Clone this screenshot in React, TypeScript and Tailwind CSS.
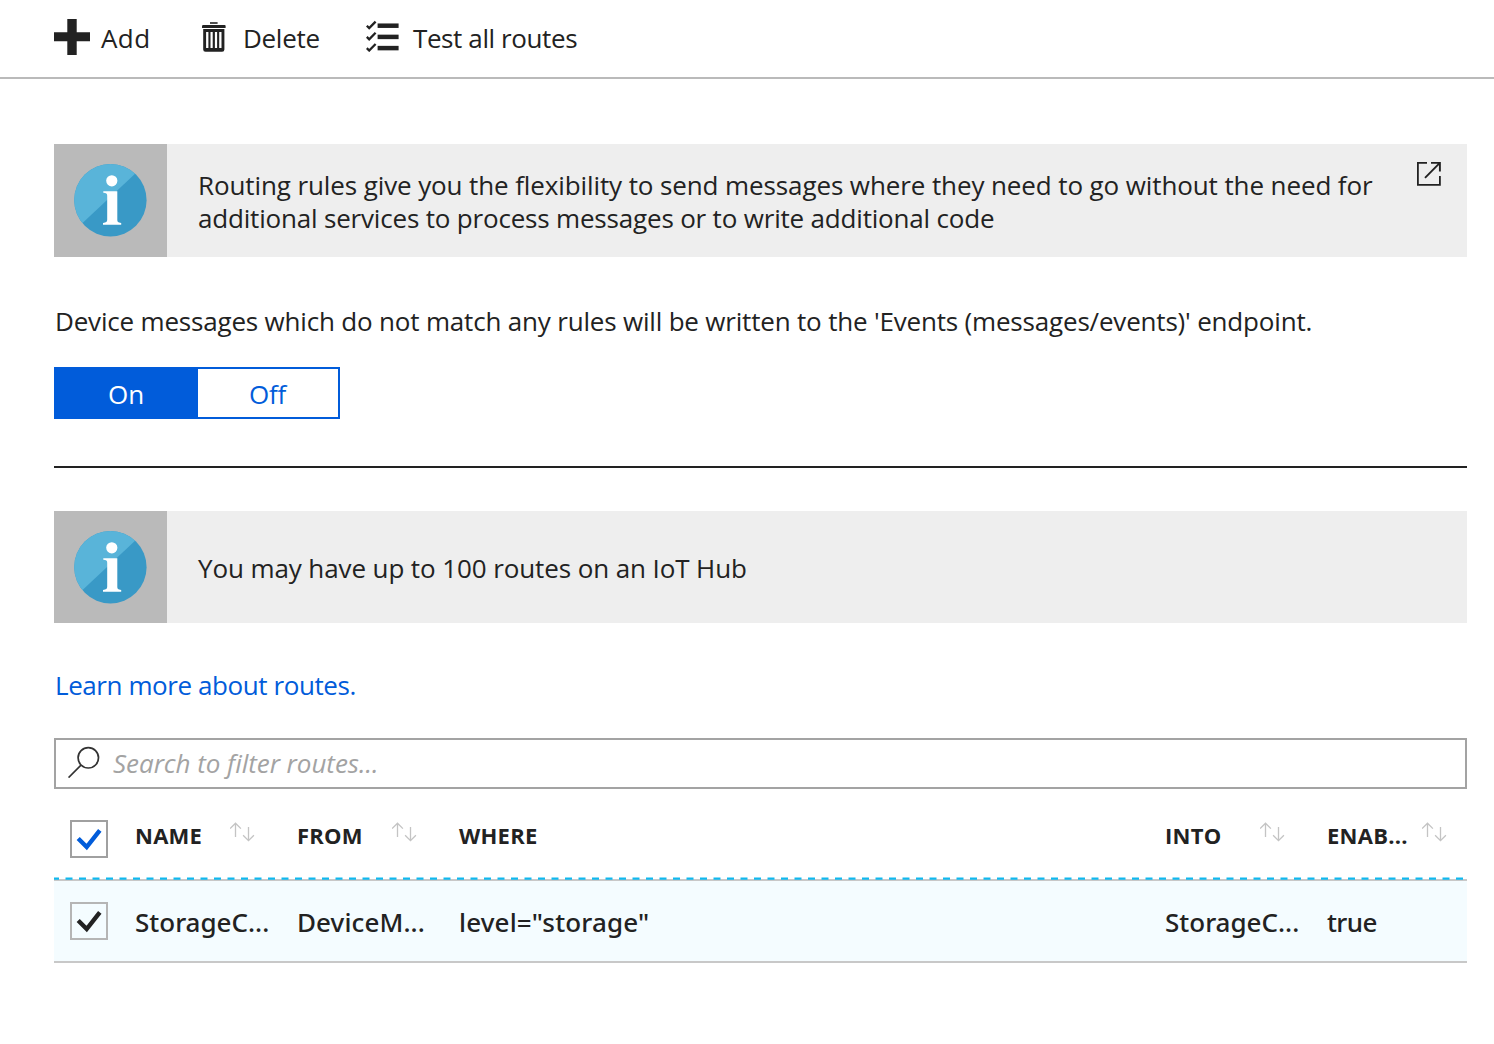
import React, { useId } from 'react';

function PlusIcon() {
  return (
    <svg className="block h-9 w-9" viewBox="0 0 36 36" fill="#222">
      <path d="M13.3 0h9.4v13.3H36v9H22.7V36h-9.4V22.3H0v-9h13.3z" />
    </svg>
  );
}

function TrashIcon() {
  return (
    <svg className="block h-[30px] w-6" viewBox="0 0 24 30" fill="#222">
      <path d="M8 0.2h7.6v1.6H8z" />
      <path d="M1.2 3h21.400a1 1 0 0 1 1 1v1.900H0V4.2A1.2 1.2 0 0 1 1.200 3z" />
      <path
        fillRule="evenodd"
        d="M1.200 7h21.200v20.500a2.300 2.300 0 0 1-2.300 2.300H3.500a2.300 2.300 0 0 1-2.300-2.300zM4.100 10v16h2.300V10zM8.500 10v16h2.200V10zM12.900 10v16h2.200V10zM17.200 10v16h2.300V10z"
      />
    </svg>
  );
}

function ChecklistIcon() {
  return (
    <svg className="block h-8 w-[33px]" viewBox="0 0 33 32" fill="none" stroke="#222">
      {[0, 11.2, 22.4].map((y) => (
        <g key={y} transform={`translate(0 ${y})`}>
          <path d="M0.800 5.700l2.400 2.400L9.600 1.600" strokeWidth="2.300" />
          <path d="M11.600 5.700h21" strokeWidth="4.500" />
        </g>
      ))}
    </svg>
  );
}

function InfoBadge() {
  const clip = useId();
  return (
    <div className="flex w-[113px] shrink-0 items-center justify-center bg-[#bababa]">
      <svg className="block h-[73px] w-[73px]" viewBox="0 0 73 73">
        <clipPath id={clip}>
          <circle cx="36.400" cy="36.200" r="36.200" />
        </clipPath>
        <g clipPath={`url(#${clip})`}>
          <path d="M0 0h73v73H0z" fill="#3999c6" />
          <path d="M0 0H71.500L0 67z" fill="#59b4d9" />
        </g>
        <circle cx="37.800" cy="16.800" r="5.600" fill="#fff" />
        <path
          fill="#fff"
          d="M29.300 27.200h14v28.300c0 2.300 0.600 2.900 3.900 3.500v1.700H29v-1.700c3.200-0.600 4.200-1.200 4.200-3.500V31.700c0-2.300-1-2.600-3.900-3z"
        />
      </svg>
    </div>
  );
}

function ExternalIcon() {
  return (
    <svg className="block h-6 w-6" viewBox="0 0 24 24" fill="none" stroke="#222" strokeWidth="1.800">
      <path d="M10 0.900H0.900v22h22V14" />
      <path d="M14 0.900h8.900V9.500M22.600 1.200L8 15.800" strokeWidth="1.900" />
    </svg>
  );
}

function SearchIcon() {
  return (
    <svg className="block h-8 w-8" viewBox="0 0 32 32" fill="none" stroke="#333" strokeWidth="1.700">
      <circle cx="20.300" cy="11.800" r="10.200" />
      <path d="M13 19.100L0.500 31.600" />
    </svg>
  );
}

function SortIcon() {
  return (
    <svg className="mt-[2px] block h-5 w-[25px] shrink-0" viewBox="0 0 25 20" fill="none" stroke="#c4c4c4" strokeWidth="1.300">
      <path d="M5.500 15V1.200M0.100 6.600L5.500 1.200l5.400 5.400" />
      <path d="M18.500 5v13.600M13.100 13.200l5.400 5.400 5.400-5.400" />
    </svg>
  );
}

function Checkbox({ header }: { header?: boolean }) {
  return (
    <div
      className={
        header
          ? 'h-[38px] w-[38px] border-2 border-[#a0a0a0] bg-white text-[#015cda]'
          : 'h-[38px] w-[38px] border-2 border-[#b5b5b5] bg-[#f4fcff] text-[#222]'
      }
    >
      <svg className="block h-[34px] w-[34px]" viewBox="0 0 34 34" fill="none" stroke="currentColor" strokeWidth="4.400">
        <path d="M6.200 16.500l8.500 8.500L27.800 8.300" />
      </svg>
    </div>
  );
}

function HeaderCell({ label, className, sortable = true }: { label: string; className: string; sortable?: boolean }) {
  return (
    <div className={`flex justify-between ${className}`}>
      <span className="-mt-px text-[22px] leading-[33px] font-bold tracking-[0.25px]">{label}</span>
      {sortable && <SortIcon />}
    </div>
  );
}

export default function App() {
  return (
    <div className="h-[1044px] w-[1494px] bg-white font-['Open_Sans',sans-serif] text-[26px] leading-[33px] whitespace-nowrap text-[#222]">
      <header className="flex h-[79px] items-start border-b-2 border-[#bababa] pl-[54px]">
        <button className="flex w-[148px]">
          <span className="mt-[19px]"><PlusIcon /></span>
          <span className="mt-[22px] ml-[11px] tracking-[0.4px]">Add</span>
        </button>
        <button className="flex w-[164px]">
          <span className="mt-[22px]"><TrashIcon /></span>
          <span className="mt-[22px] ml-[17px] tracking-[-0.3px]">Delete</span>
        </button>
        <button className="flex">
          <span className="mt-5"><ChecklistIcon /></span>
          <span className="mt-[22px] ml-[14px] tracking-[-0.4px]">Test all routes</span>
        </button>
      </header>

      <main className="mt-[65px] ml-[54px] w-[1413px]">
        <section className="flex h-[113px] bg-[#eee]">
          <InfoBadge />
          <p className="mt-[25px] ml-[31px] grow">
            <span className="block tracking-[-0.107px]">
              Routing rules give you the flexibility to send messages where they need to go without the need for
            </span>
            <span className="block tracking-[-0.185px]">
              additional services to process messages or to write additional code
            </span>
          </p>
          <span className="mt-[18px] mr-[26px]"><ExternalIcon /></span>
        </section>

        <p className="mt-[48px] ml-px tracking-[-0.185px]">
          Device messages which do not match any rules will be written to the 'Events (messages/events)' endpoint.
        </p>

        <div className="mt-[29px] flex h-[52px] w-[286px] border-2 border-[#015cda] bg-[#015cda] text-center">
          <button className="flex w-[142px] justify-center pt-[9px] text-white">
            <span className="-ml-[2px] block">On</span>
          </button>
          <button className="flex grow justify-center bg-white pt-[9px] text-[#015cda]">
            <span className="-ml-px block tracking-[-0.3px]">Off</span>
          </button>
        </div>

        <hr className="mt-[47px] border-t-2 border-[#222]" />

        <section className="mt-[43px] flex h-28 bg-[#eee]">
          <InfoBadge />
          <p className="mt-[41px] ml-[31px] tracking-[-0.103px]">You may have up to 100 routes on an IoT Hub</p>
        </section>

        <a className="mt-[46px] ml-px block tracking-[-0.42px] text-[#015cda]">Learn more about routes.</a>

        <div className="mt-[36px] flex h-[51px] border-2 border-[#a3a3a3]">
          <span className="mt-[6px] ml-3"><SearchIcon /></span>
          <span className="mt-[7px] ml-[13px] tracking-[-0.04px] text-[#a3a3a3] italic">Search to filter routes...</span>
        </div>

        <div className="mt-[31px] flex h-[58px] pl-4">
          <Checkbox header />
          <HeaderCell label="NAME" className="ml-[27px] w-[120px]" />
          <HeaderCell label="FROM" className="ml-[42px] w-[120px]" />
          <HeaderCell label="WHERE" className="ml-[42px] w-[120px]" sortable={false} />
          <HeaderCell label="INTO" className="ml-[586px] w-[120px]" />
          <HeaderCell label="ENAB..." className="ml-[42px] w-[120px]" />
        </div>

        <div className="relative mt-px flex h-[84px] border-y-2 border-[#c8c8c8] bg-[#f4fcff] pl-4 font-['Noto_Sans',sans-serif] font-medium">
          <svg className="absolute -top-[4px] left-0 h-[4px] w-[1413px]" viewBox="0 0 1413 4">
            <path d="M0 1.600H1413" stroke="#10b8ee" strokeWidth="2.400" strokeDasharray="7 6.500" strokeDashoffset="2" />
          </svg>
          <span className="mt-[21px]"><Checkbox /></span>
          <span className="mt-[25px] ml-[27px] w-[162px]">StorageC...</span>
          <span className="mt-[25px] w-[162px] tracking-[0.1px]">DeviceM...</span>
          <span className="mt-[25px] w-[706px] tracking-[0.15px]">level="storage"</span>
          <span className="mt-[25px] w-[162px]">StorageC...</span>
          <span className="mt-[25px] tracking-[-0.6px]">true</span>
        </div>
      </main>
    </div>
  );
}
